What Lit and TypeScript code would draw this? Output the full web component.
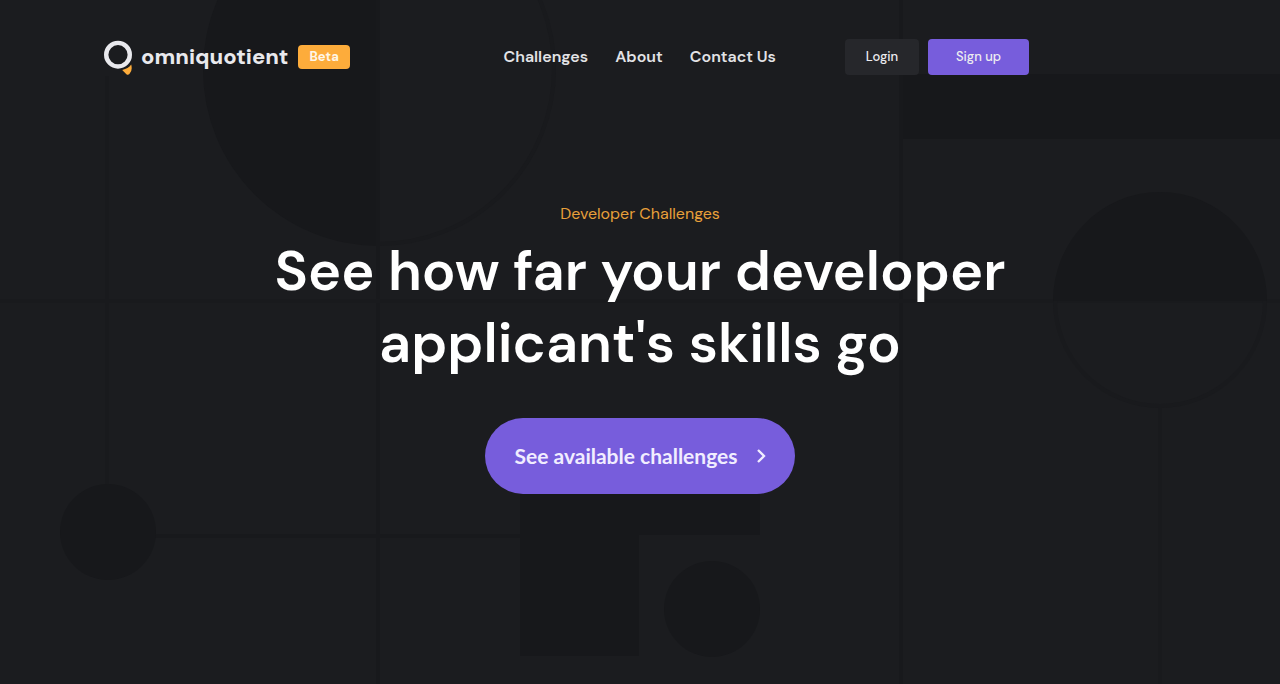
import { LitElement, html, css } from "lit";
import { customElement } from "lit/decorators.js";

@customElement("app-backdrop")
class AppBackdrop extends LitElement {
  static styles = css`
    :host {
      display: block;
      position: absolute;
      inset: 0;
      overflow: hidden;
      pointer-events: none;
    }
    .art {
      display: block;
      width: 100%;
      height: 100%;
    }
    .fill {
      fill: #17181b;
    }
    .line {
      fill: none;
      stroke: #18191c;
      stroke-width: 4;
    }
    .faint {
      stroke: #191a1d;
    }
  `;

  render() {
    return html`
      <svg class="art" viewBox="0 0 1280 684" preserveAspectRatio="xMidYMin slice" aria-hidden="true">
        <path class="fill" d="M379-106A176 176 0 0 0 379 246Z" />
        <path class="line faint" d="M379 244A175 175 0 0 0 379-106" />
        <path class="line" d="M378 0V684M901 0V684M155 536H520" />
        <path class="line faint" d="M0 301H1280M107 76V484M1160 408V684" />
        <path class="fill" d="M903 74H1280V139H903Z" />
        <path class="fill" d="M1053 301A107 109 0 0 1 1267 301Z" />
        <path class="line faint" d="M1055 301A105 105 0 0 0 1265 301" />
        <circle class="fill" cx="108" cy="532" r="48" />
        <path class="fill" d="M520 460H760V535H639V656H520Z" />
        <circle class="fill" cx="712" cy="609" r="48" />
      </svg>
    `;
  }
}

@customElement("app-header")
class AppHeader extends LitElement {
  static styles = css`
    :host {
      display: block;
      position: relative;
    }
    .bar {
      display: flex;
      align-items: center;
      gap: 69px;
      max-width: 925px;
      margin-left: 104px;
      padding-top: 39px;
    }
    .brand {
      display: flex;
      align-items: center;
      gap: 10px;
      margin-right: auto;
    }
    .logo {
      display: flex;
      align-items: center;
      gap: 9px;
      color: #e9e9ed;
      font: 800 22px/36px "DM Sans", Inter, sans-serif;
      text-decoration: none;
    }
    .mark {
      width: 28px;
      height: 36px;
    }
    .beta {
      padding: 0 11px;
      border-radius: 4px;
      background: #fdac3b;
      color: #fff6e6;
      font: 700 13px/24px "DM Sans", "Open Sans", sans-serif;
    }
    .nav {
      display: flex;
      gap: 27px;
    }
    .link {
      color: #e3e3e6;
      font: 600 16px/24px "DM Sans", Inter, sans-serif;
      text-decoration: none;
    }
    .auth {
      display: flex;
      gap: 9px;
    }
    .button {
      min-width: 74px;
      height: 36px;
      padding: 0;
      border: 0;
      border-radius: 4px;
      background: #26272b;
      color: #ededf0;
      font: 500 13px/36px "DM Sans", Inter, sans-serif;
      cursor: pointer;
    }
    .primary {
      min-width: 101px;
      background: #775ddc;
    }
  `;

  render() {
    return html`
      <header class="bar">
        <div class="brand">
          <a class="logo" href="#">
            <svg class="mark" viewBox="0 0 28 36" aria-hidden="true">
              <circle cx="14" cy="15.7" r="11.8" fill="none" stroke="#e9e9ed" stroke-width="4.4" />
              <path d="M18.2 31Q24.3 29.8 27.2 25.6Q28.8 31.5 25.4 35Q24 36.4 22.4 35.2Z" fill="#fdac3b" />
            </svg>
            <span>omniquotient</span>
          </a>
          <span class="beta">Beta</span>
        </div>
        <nav class="nav">
          <a class="link" href="#challenges">Challenges</a>
          <a class="link" href="#about">About</a>
          <a class="link" href="#contact">Contact Us</a>
        </nav>
        <div class="auth">
          <button class="button" type="button">Login</button>
          <button class="button primary" type="button">Sign up</button>
        </div>
      </header>
    `;
  }
}

@customElement("app-root")
class AppRoot extends LitElement {
  static styles = css`
    :host {
      display: block;
      position: relative;
      min-height: 100vh;
      background: #1b1c1f;
      -webkit-font-smoothing: antialiased;
    }
    .hero {
      position: relative;
      display: flex;
      flex-direction: column;
      align-items: center;
      padding: 127px 24px 48px;
      text-align: center;
    }
    .eyebrow {
      margin: 0;
      color: #e8a03a;
      font: 400 16px/24px "DM Sans", Inter, sans-serif;
    }
    .title {
      max-width: 800px;
      margin: 9px 0 0;
      color: #fff;
      font: 600 56px/72px "DM Sans", Inter, sans-serif;
    }
    .cta {
      display: flex;
      align-items: center;
      gap: 18px;
      margin-top: 39px;
      padding: 0 29px;
      border-radius: 38px;
      background: #775ddc;
      color: #f1edff;
      font: 700 21px/76px Lato, sans-serif;
      text-decoration: none;
    }
    .chevron {
      width: 10px;
      height: 14px;
      fill: none;
      stroke: currentColor;
      stroke-width: 2.3;
    }
  `;

  render() {
    return html`
      <app-backdrop></app-backdrop>
      <app-header></app-header>
      <main class="hero">
        <p class="eyebrow">Developer Challenges</p>
        <h1 class="title">See how far your developer applicant's skills go</h1>
        <a class="cta" href="#challenges">
          <span>See available challenges</span>
          <svg class="chevron" viewBox="0 0 10 14" aria-hidden="true"><path d="M2 1L8 7L2 13" /></svg>
        </a>
      </main>
    `;
  }
}
